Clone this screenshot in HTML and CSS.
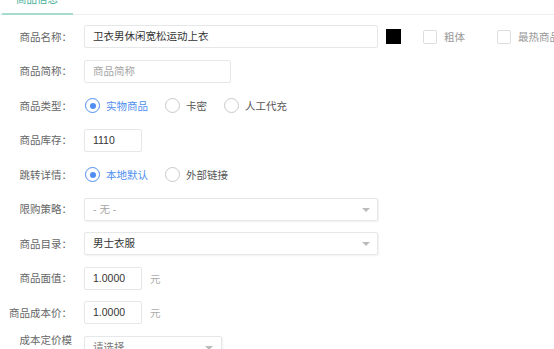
FILE: index.html
```html
<!DOCTYPE html>
<html lang="zh">

<head>
    <meta charset="UTF-8">
    <meta name="viewport" content="width=device-width, initial-scale=1.0">
    <title>商品信息</title>
    <link rel="stylesheet" href="styles.css">
</head>

<body>
    <!-- 标签页 -->
    <div class="tab-bar">
        <div class="tab active">商品信息</div>
    </div>

    <!-- 表单 -->
    <div class="form">
        <div class="row">
            <label class="label">商品名称：</label>
            <div class="input wide">卫衣男休闲宽松运动上衣</div>
            <span class="color-box"></span>
            <span class="check"></span><span class="check-text">粗体</span>
            <span class="check second"></span><span class="check-text">最热商品</span>
        </div>

        <div class="row">
            <label class="label">商品简称：</label>
            <div class="input mid placeholder">商品简称</div>
        </div>

        <div class="row">
            <label class="label">商品类型：</label>
            <span class="radio checked"></span><span class="radio-text on">实物商品</span>
            <span class="radio"></span><span class="radio-text">卡密</span>
            <span class="radio"></span><span class="radio-text">人工代充</span>
        </div>

        <div class="row">
            <label class="label">商品库存：</label>
            <div class="input small">1110</div>
        </div>

        <div class="row">
            <label class="label">跳转详情：</label>
            <span class="radio checked"></span><span class="radio-text on">本地默认</span>
            <span class="radio"></span><span class="radio-text">外部链接</span>
        </div>

        <div class="row">
            <label class="label">限购策略：</label>
            <div class="select wide placeholder">- 无 -<span class="arrow"></span></div>
        </div>

        <div class="row">
            <label class="label">商品目录：</label>
            <div class="select wide">男士衣服<span class="arrow"></span></div>
        </div>

        <div class="row">
            <label class="label">商品面值：</label>
            <div class="input small">1.0000</div>
            <span class="unit">元</span>
        </div>

        <div class="row">
            <label class="label">商品成本价：</label>
            <div class="input small">1.0000</div>
            <span class="unit">元</span>
        </div>

        <div class="row">
            <label class="label">成本定价模板：</label>
            <div class="select half grey">请选择<span class="arrow"></span></div>
        </div>
    </div>
</body>

</html>
```

FILE: styles.css
```css
body {
    margin: 0;
    padding: 0;
    font-family: "Liberation Sans", "Noto Sans CJK SC", sans-serif;
    font-size: 10.5px;
    color: #333;
    background: #fff;
    overflow: hidden;
}

/* 标签页 */
.tab-bar {
    margin-top: -8px;
    border-bottom: 1px solid #eceeef;
    display: flex;
}

.tab {
    margin-left: 2px;
    padding: 0 15px 7px 14px;
    line-height: 14px;
    margin-bottom: -1px;
}

.tab.active {
    color: #3fae96;
    border-bottom: 2px solid #a6dbcf;
}

/* 表单 */
.form {
    padding-top: 10px;
}

.row {
    display: flex;
    align-items: center;
    height: 23px;
    margin-bottom: 11.5px;
}

.row > * {
    flex-shrink: 0;
}

.label {
    width: 63px;
    margin-left: 9px;
    margin-right: 12px;
    text-align: right;
    color: #666;
    line-height: 14px;
}

.input,
.select {
    box-sizing: border-box;
    height: 23px;
    line-height: 21px;
    padding: 0 8px;
    border: 1px solid #e6e7e8;
    border-radius: 2px;
    color: #333;
    white-space: nowrap;
}

.select {
    position: relative;
    box-shadow: 1px 1px 2px rgba(0, 0, 0, 0.06);
}

.wide {
    width: 294px;
}

.mid {
    width: 147px;
}

.small {
    width: 58px;
}

.half {
    width: 138px;
}

.placeholder {
    color: #a5a5a5;
}

.grey {
    color: #777;
}

.arrow {
    position: absolute;
    right: 7px;
    top: 9px;
    width: 0;
    height: 0;
    border-left: 4px solid transparent;
    border-right: 4px solid transparent;
    border-top: 4px solid #bbb;
}

.half .arrow {
    right: 8px;
}

.color-box {
    width: 15px;
    height: 15px;
    background: #000;
    margin-left: 8px;
}

.check {
    box-sizing: border-box;
    width: 14px;
    height: 14px;
    border: 1px solid #ddd;
    border-radius: 2px;
    margin-left: 22px;
}

.check.second {
    margin-left: 32px;
}

.check-text {
    margin-left: 7px;
    color: #999;
    white-space: nowrap;
}

/* 单选框 */
.radio {
    box-sizing: border-box;
    width: 15px;
    height: 15px;
    border: 1px solid #c9c9c9;
    border-radius: 50%;
    margin-left: 1px;
    position: relative;
}

.radio.checked {
    border-color: #4f8ef0;
}

.radio.checked::after {
    content: "";
    position: absolute;
    left: 3.5px;
    top: 3.5px;
    width: 6px;
    height: 6px;
    border-radius: 50%;
    background: #4f8ef0;
}

.radio-text {
    margin-left: 6px;
    margin-right: 16px;
    color: #555;
}

.radio-text.on {
    color: #4f8ef0;
}

.unit {
    margin-left: 8px;
    color: #aaa;
}
```
